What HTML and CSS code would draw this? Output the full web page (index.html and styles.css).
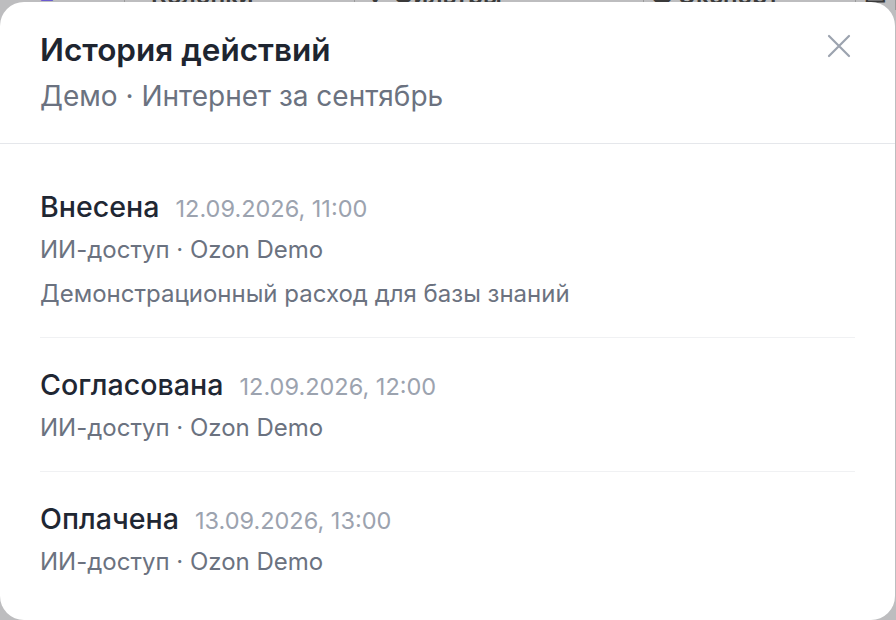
FILE: index.html
```html
<!DOCTYPE html>
<html lang="ru">
<head>
<meta charset="utf-8">
<link rel="stylesheet" href="styles.css">
</head>
<body>
<div class="backdrop">
  <div class="toolbar">
    <span class="tb-item tb-accent">≡</span>
    <span class="tb-item tb-cols">• Колонки</span>
    <span class="tb-item tb-filter">▽ Фильтры</span>
    <span class="tb-item tb-export">⇊ Экспорт</span>
    <span class="tb-item">▭</span>
  </div>
</div>
<div class="modal">
  <header class="modal-head">
    <div class="head-text">
      <h1 class="title">История действий</h1>
      <div class="subtitle">Демо · Интернет за сентябрь</div>
    </div>
    <button class="close" aria-label="Закрыть">
      <svg width="24" height="24" viewBox="0 0 24 24" fill="none" stroke="#9ca3af" stroke-width="2.2" stroke-linecap="round"><path d="M2 2 L22 22 M22 2 L2 22"/></svg>
    </button>
  </header>
  <div class="list">
    <div class="item">
      <div class="item-top"><span class="status">Внесена</span><span class="date">12.09.2026, 11:00</span></div>
      <div class="meta">ИИ-доступ · Ozon Demo</div>
      <div class="desc">Демонстрационный расход для базы знаний</div>
    </div>
    <div class="item">
      <div class="item-top"><span class="status">Согласована</span><span class="date">12.09.2026, 12:00</span></div>
      <div class="meta">ИИ-доступ · Ozon Demo</div>
    </div>
    <div class="item">
      <div class="item-top"><span class="status">Оплачена</span><span class="date">13.09.2026, 13:00</span></div>
      <div class="meta">ИИ-доступ · Ozon Demo</div>
    </div>
  </div>
</div>
</body>
</html>
```
FILE: styles.css
```css
* { box-sizing: border-box; }
html, body { margin: 0; padding: 0; }
body {
  width: 896px;
  height: 620px;
  overflow: hidden;
  background: #bdbdbf;
  font-family: Inter, "Noto Sans", sans-serif;
}
.backdrop {
  height: 620px;
}
.toolbar {
  display: flex;
  margin-top: -17px;
  height: 24px;
  align-items: center;
  color: #3a3a3a;
  font-size: 24px;
  font-weight: 600;
  white-space: nowrap;
}
.tb-item {
  padding: 0 8px;
  border-right: 1px solid #9a9a9a;
}
.tb-accent { color: #6b5bd0; width: 125px; padding-left: 40px; }
.tb-cols { width: 230px; }
.tb-filter { width: 290px; }
.tb-export { width: 212px; }
.modal {
  position: absolute;
  left: 0;
  top: 2px;
  width: 895px;
  height: 618px;
  background: #fff;
  border-radius: 24px;
}
.modal-head {
  display: flex;
  justify-content: space-between;
  align-items: flex-start;
  padding: 30px 44px 31px 40px;
  border-bottom: 1px solid #e5e7eb;
}
.title {
  margin: 0;
  font-size: 31.5px;
  line-height: 36px;
  font-weight: 600;
  color: #1e2530;
}
.subtitle {
  margin-top: 12px;
  font-size: 28px;
  line-height: 32px;
  color: #6b7280;
}
.close {
  border: 0;
  background: none;
  padding: 0;
  margin-top: 2px;
  width: 24px;
  height: 24px;
  display: flex;
}
.list {
  padding: 16px 40px 14px 40px;
}
.item {
  padding: 28px 0;
  border-bottom: 1px solid #f0f1f3;
}
.item:last-child { border-bottom: 0; }
.item-top {
  display: flex;
  align-items: baseline;
  gap: 16px;
  height: 38px;
  line-height: 38px;
}
.status {
  font-size: 28.6px;
  font-weight: 500;
  color: #1f2733;
}
.date {
  font-size: 23.5px;
  color: #9ca3af;
}
.meta {
  margin-top: 9px;
  font-size: 24px;
  line-height: 30px;
  color: #6b7280;
}
.desc {
  margin-top: 14px;
  font-size: 24px;
  line-height: 30px;
  color: #6b7280;
}
```
